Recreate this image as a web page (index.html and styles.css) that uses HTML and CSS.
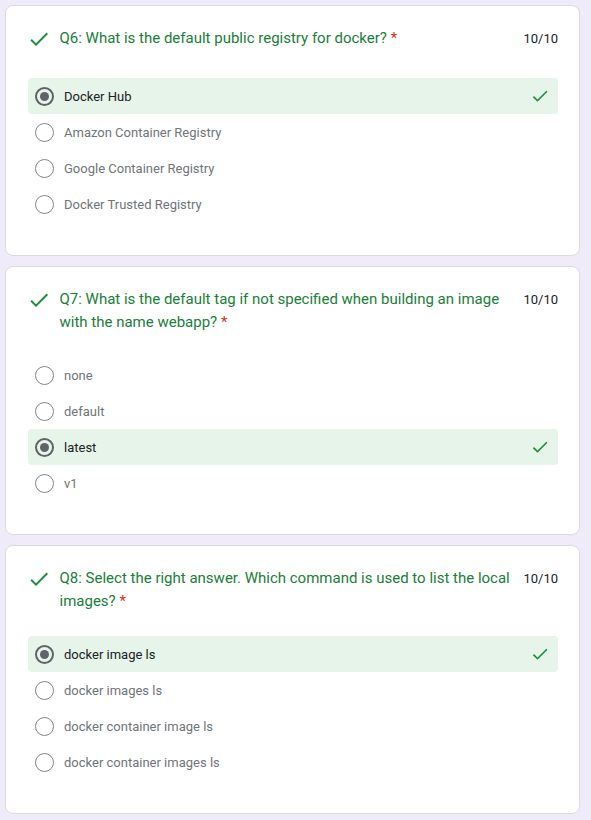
FILE: index.html
```html
<!DOCTYPE html>
<html>
<head>
<meta charset="utf-8">
<link rel="stylesheet" href="styles.css">
</head>
<body>
<div class="page">

<div class="card">
  <div class="qhead">
    <svg class="qcheck" viewBox="0 0 24 24"><path d="M9 16.17L4.83 12l-1.42 1.41L9 19 21 7l-1.41-1.41z"/></svg>
    <div class="qtitle">Q6: What is the default public registry for docker? <span class="req">*</span></div>
    <div class="score">10/10</div>
  </div>
  <div class="opts">
    <div class="opt correct"><span class="radio on"></span><span class="otext">Docker Hub</span><svg class="ocheck" viewBox="0 0 24 24"><path d="M9 16.17L4.83 12l-1.42 1.41L9 19 21 7l-1.41-1.41z"/></svg></div>
    <div class="opt"><span class="radio"></span><span class="otext">Amazon Container Registry</span></div>
    <div class="opt"><span class="radio"></span><span class="otext">Google Container Registry</span></div>
    <div class="opt"><span class="radio"></span><span class="otext">Docker Trusted Registry</span></div>
  </div>
</div>

<div class="card">
  <div class="qhead">
    <svg class="qcheck" viewBox="0 0 24 24"><path d="M9 16.17L4.83 12l-1.42 1.41L9 19 21 7l-1.41-1.41z"/></svg>
    <div class="qtitle">Q7: What is the default tag if not specified when building an image with the name webapp? <span class="req">*</span></div>
    <div class="score">10/10</div>
  </div>
  <div class="opts">
    <div class="opt"><span class="radio"></span><span class="otext">none</span></div>
    <div class="opt"><span class="radio"></span><span class="otext">default</span></div>
    <div class="opt correct"><span class="radio on"></span><span class="otext">latest</span><svg class="ocheck" viewBox="0 0 24 24"><path d="M9 16.17L4.83 12l-1.42 1.41L9 19 21 7l-1.41-1.41z"/></svg></div>
    <div class="opt"><span class="radio"></span><span class="otext">v1</span></div>
  </div>
</div>

<div class="card">
  <div class="qhead">
    <svg class="qcheck" viewBox="0 0 24 24"><path d="M9 16.17L4.83 12l-1.42 1.41L9 19 21 7l-1.41-1.41z"/></svg>
    <div class="qtitle">Q8: Select the right answer. Which command is used to list the local images? <span class="req">*</span></div>
    <div class="score">10/10</div>
  </div>
  <div class="opts">
    <div class="opt correct"><span class="radio on"></span><span class="otext">docker image ls</span><svg class="ocheck" viewBox="0 0 24 24"><path d="M9 16.17L4.83 12l-1.42 1.41L9 19 21 7l-1.41-1.41z"/></svg></div>
    <div class="opt"><span class="radio"></span><span class="otext">docker images ls</span></div>
    <div class="opt"><span class="radio"></span><span class="otext">docker container image ls</span></div>
    <div class="opt"><span class="radio"></span><span class="otext">docker container images ls</span></div>
  </div>
</div>

</div>
</body>
</html>
```

FILE: styles.css
```css
html, body {
  margin: 0;
  padding: 0;
  background: #f0ebf8;
}
body {
  font-family: Roboto, "Liberation Sans", sans-serif;
}
.page {
  padding: 5px 11px 6px 5px;
  display: flex;
  flex-direction: column;
  gap: 10px;
}
.card {
  background: #fff;
  border: 1px solid #dadce0;
  border-radius: 8px;
  padding: 21px 21px 33px 22px;
}
.qhead {
  display: flex;
  align-items: flex-start;
  min-height: 29px;
  margin-bottom: 22px;
}
.qcheck {
  width: 24px;
  height: 24px;
  flex: none;
  fill: #1e8e3e;
  margin: 0 9px 0 -1.5px;
}
.qtitle {
  flex: 1;
  font-size: 15px;
  line-height: 23px;
  padding-bottom: 1px;
  color: #188038;
  padding-right: 8px;
}
.req {
  color: #d93025;
}
.score {
  flex: none;
  font-size: 13px;
  line-height: 24px;
  color: #202124;
}
.opts {
  display: flex;
  flex-direction: column;
}
.opt {
  height: 36px;
  display: flex;
  align-items: center;
  border-radius: 4px;
  padding-left: 7px;
  padding-right: 8px;
}
.opt.correct {
  background: #e6f4ea;
}
.radio {
  width: 19px;
  height: 19px;
  box-sizing: border-box;
  border: 1.5px solid #80868b;
  border-radius: 50%;
  flex: none;
  display: flex;
  align-items: center;
  justify-content: center;
  margin-right: 10px;
}
.radio.on {
  border: 2px solid #5f6368;
}
.radio.on::after {
  content: "";
  width: 9px;
  height: 9px;
  border-radius: 50%;
  background: #5f6368;
}
.otext {
  flex: 1;
  font-size: 13px;
  color: #70757a;
}
.opt.correct .otext {
  color: #202124;
}
.ocheck {
  width: 20px;
  height: 20px;
  fill: #1e8e3e;
  flex: none;
}
```
